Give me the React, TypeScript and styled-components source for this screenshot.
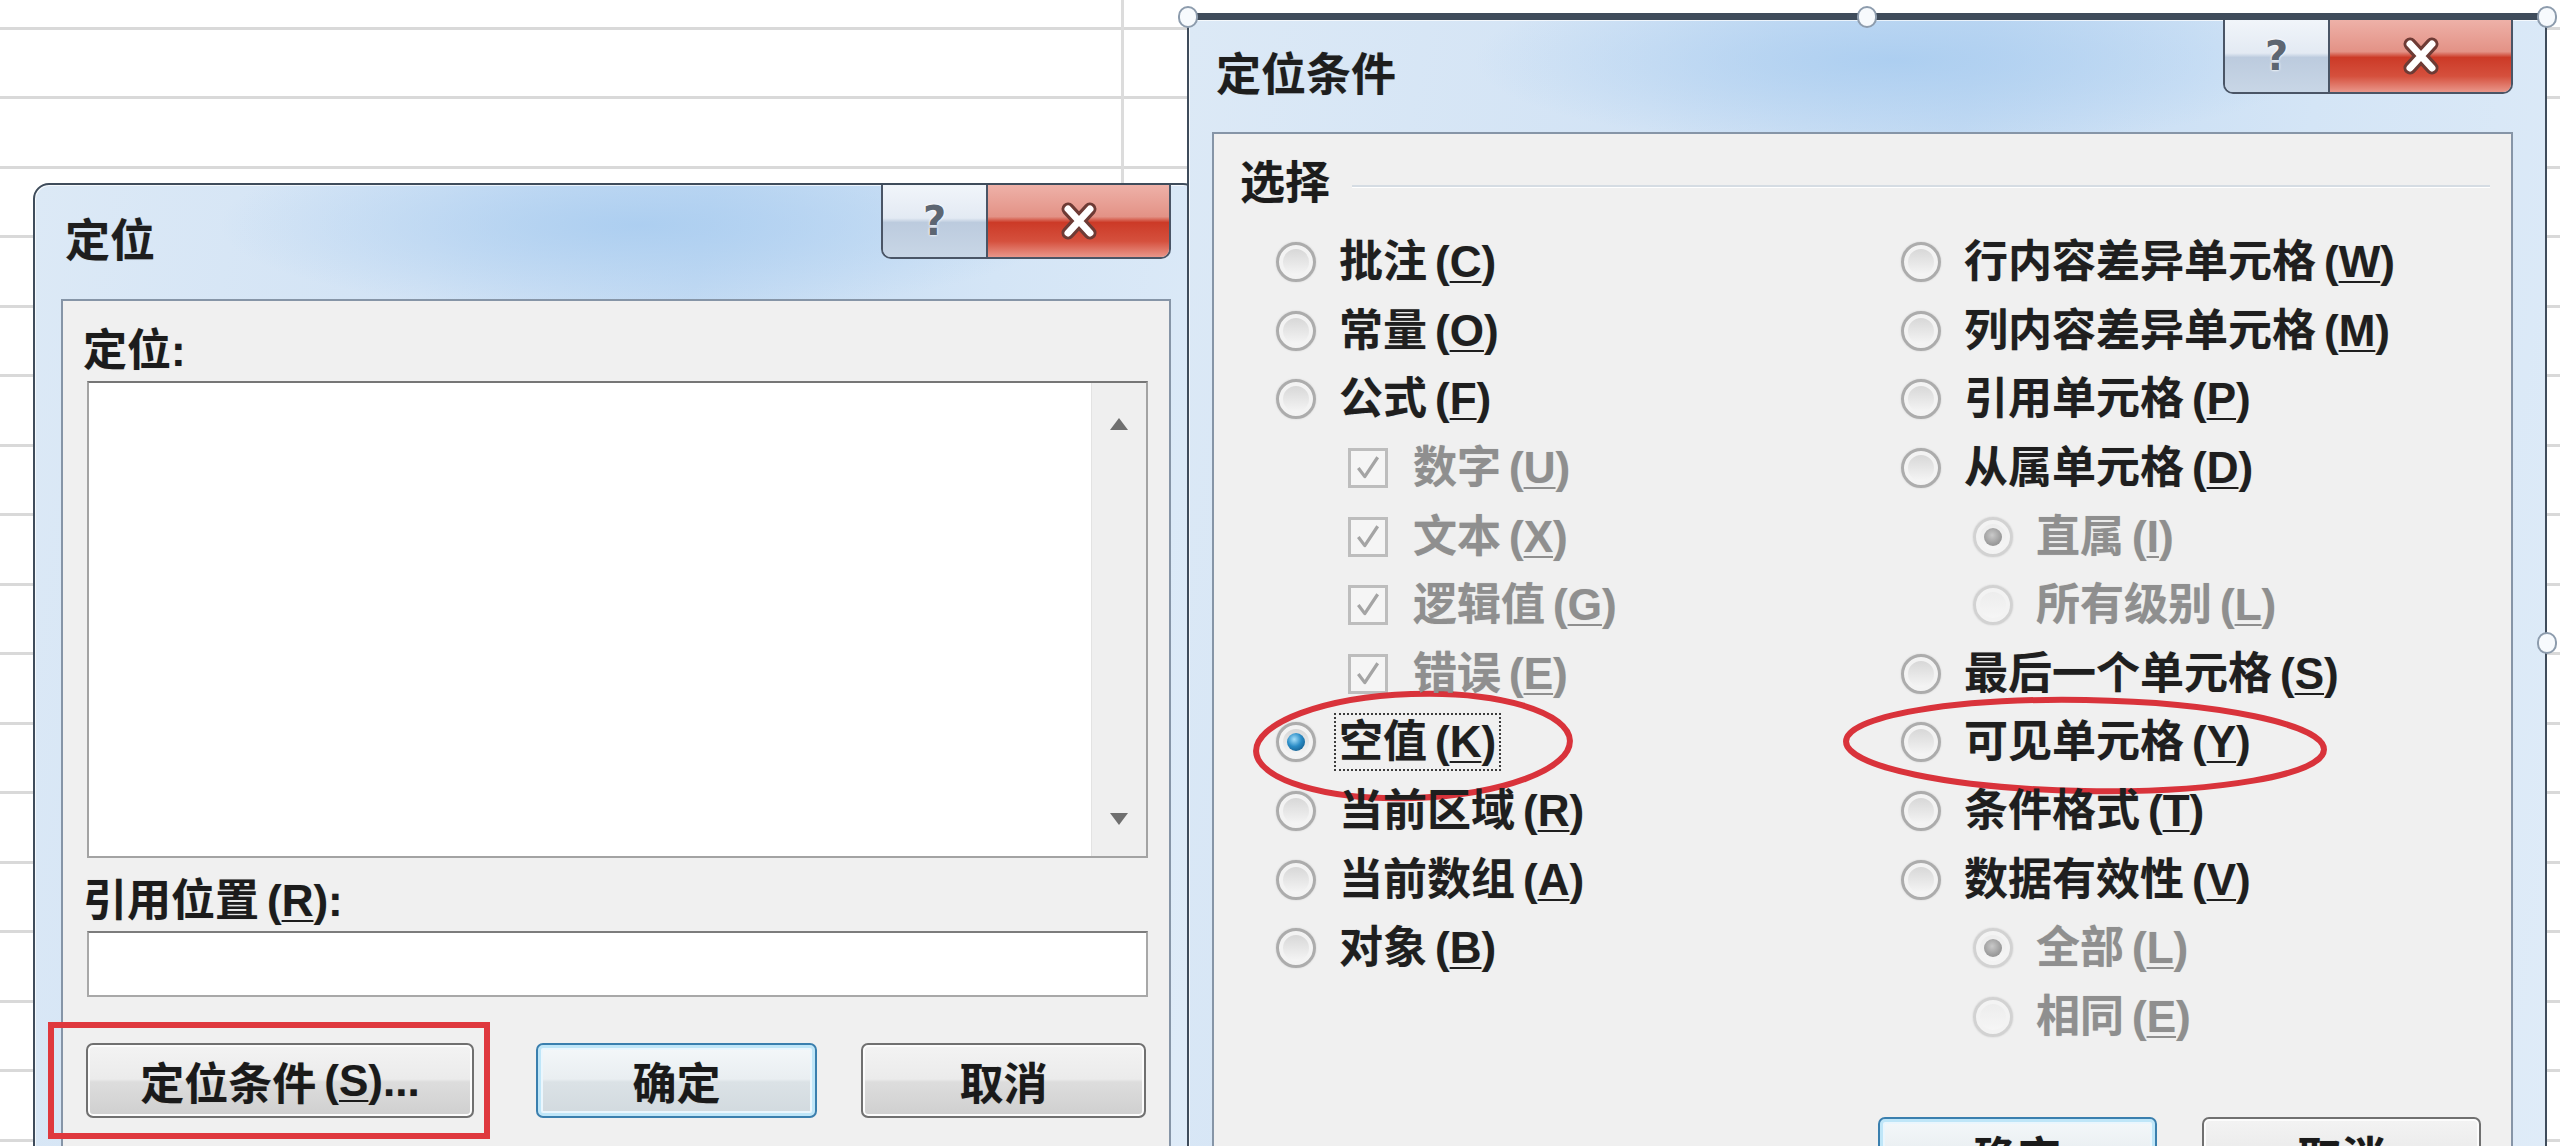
import React from 'react';
import styled, { createGlobalStyle, css } from 'styled-components';

const GlobalStyle = createGlobalStyle`
  html, body {
    margin: 0;
    padding: 0;
    background: #ffffff;
  }
  body {
    font-family: "Liberation Sans", "Noto Sans CJK SC", sans-serif;
    color: #1c1c1c;
  }
`;

// the reference is an enlarged bitmap, strokes read thick and soft
const heavy = css`
  font-weight: 700;
  text-shadow: 0 0 1px rgba(0, 0, 0, 0.25);
`;

const Sheet = styled.div`
  position: relative;
  width: 2560px;
  height: 1146px;
  overflow: hidden;
  background-color: #ffffff;
  background-image:
    linear-gradient(to right, transparent 1121px, #dcdcdc 1121px, #dcdcdc 1124px, transparent 1124px),
    repeating-linear-gradient(
      to bottom,
      transparent 0,
      transparent 27px,
      #d9d9d9 27px,
      #d9d9d9 30px,
      transparent 30px,
      transparent 69.5px
    );
`;

type WindowProps = {
  $x: number;
  $y: number;
  $w: number;
  $h: number;
  $top: number;
  $padL: number;
  $padR: number;
  $radius: number;
};

const Window = styled.section<WindowProps>`
  position: absolute;
  left: ${(p) => p.$x}px;
  top: ${(p) => p.$y}px;
  width: ${(p) => p.$w}px;
  height: ${(p) => p.$h}px;
  box-sizing: border-box;
  display: flex;
  flex-direction: column;
  border: 2px solid #3f4c5b;
  border-top-width: ${(p) => p.$top}px;
  border-radius: ${(p) => p.$radius}px ${(p) => p.$radius}px 0 0;
  padding: 0 ${(p) => p.$padR}px 0 ${(p) => p.$padL}px;
  background:
    radial-gradient(ellipse 420px 90px at 52% 40px, rgba(170, 205, 240, 0.9), rgba(170, 205, 240, 0) 100%),
    linear-gradient(100deg, #dce9f6 0%, #d2e3f5 30%, #c4dbf3 50%, #d4e5f6 72%, #e0ecf8 100%);
  box-shadow: inset 1px 1px 0 rgba(255, 255, 255, 0.7);
`;

const TitleBar = styled.header<{ $h: number }>`
  flex: 0 0 ${(p) => p.$h}px;
  display: flex;
  justify-content: space-between;
  align-items: center;
`;

const TitleText = styled.h1`
  margin: 0 0 0 4px;
  font-size: 45px;
  line-height: 60px;
  color: #1e1e1e;
  ${heavy}
`;

const CaptionGroup = styled.div`
  align-self: flex-start;
  display: flex;
  height: 72px;
  border: 2px solid #4a5566;
  border-top: none;
  border-radius: 0 0 10px 10px;
  overflow: hidden;
`;

const CaptionButton = styled.div<{ $kind: 'help' | 'close' }>`
  display: flex;
  align-items: center;
  justify-content: center;
  box-sizing: border-box;
  ${(p) =>
    p.$kind === 'help'
      ? css`
          width: 105px;
          border-right: 2px solid #4a5566;
          background: linear-gradient(#f1f5fa 0%, #e3eaf3 46%, #bccbde 52%, #c8d6e6 100%);
        `
      : css`
          width: 181px;
          background: linear-gradient(#eeb1a8 0%, #e39286 44%, #cc3a27 52%, #d5503d 78%, #e9968a 100%);
        `}
`;

const HelpGlyph = styled.span`
  font-family: "DejaVu Sans", sans-serif;
  font-weight: 700;
  font-size: 40px;
  line-height: 1;
  color: #5d6672;
  text-shadow: 0 0 2px #ffffff, 0 0 3px #ffffff;
`;

const Client = styled.div<{ $pad: string }>`
  flex: 1;
  box-sizing: border-box;
  background: #f0f0f0;
  border: 2px solid #8695a7;
  border-bottom: none;
  padding: ${(p) => p.$pad};
  display: flex;
  flex-direction: column;
`;

const FieldLabel = styled.div<{ $gap?: number }>`
  font-size: 44px;
  line-height: 60px;
  margin: ${(p) => p.$gap ?? 0}px 0 0 -4px;
  ${heavy}
`;

const ListBox = styled.div`
  height: 477px;
  box-sizing: border-box;
  background: #ffffff;
  border: 2px solid #a3a3a3;
  border-top-color: #767676;
  display: flex;
  justify-content: flex-end;
`;

const ScrollTrack = styled.div`
  width: 54px;
  background: #efefef;
  border-left: 1px solid #e3e3e3;
  display: flex;
  flex-direction: column;
  align-items: center;
  justify-content: space-between;
  padding: 34px 0 30px;
`;

const TextInput = styled.div`
  height: 66px;
  box-sizing: border-box;
  background: #ffffff;
  border: 2px solid #a8a8a8;
  border-top-color: #7c7c7c;
`;

const ButtonRow = styled.div<{ $gap: number; $end?: boolean }>`
  display: flex;
  align-items: center;
  margin-top: ${(p) => p.$gap}px;
  justify-content: ${(p) => (p.$end ? 'flex-end' : 'flex-start')};
  padding-right: ${(p) => (p.$end ? 30 : 0)}px;
`;

const Highlight = styled.div`
  border: 6px solid #df383e;
  padding: 15px 10px 15px 32px;
  margin-left: -39px;
`;

const PushButton = styled.div<{ $w: number; $default?: boolean; $ml?: number }>`
  width: ${(p) => p.$w}px;
  height: 75px;
  margin-left: ${(p) => p.$ml ?? 0}px;
  box-sizing: border-box;
  display: flex;
  align-items: center;
  justify-content: center;
  font-size: 44px;
  color: #1a1a1a;
  ${heavy}
  border-radius: 7px;
  border: 2px solid #707070;
  background: linear-gradient(#f3f3f3 0%, #ebebeb 48%, #dddddd 52%, #cfcfcf 100%);
  box-shadow: inset 0 0 0 2px #fcfcfc;
  ${(p) =>
    p.$default &&
    css`
      border-color: #3a7fae;
      box-shadow: inset 0 0 0 3px #bfe6f8, inset 0 0 0 5px #eaf6fd;
      background: linear-gradient(#f4f8fa 0%, #e9eef1 48%, #dbe2e6 52%, #d1d9de 100%);
    `}
`;

const Key = styled.span`
  margin-left: 8px;
  u {
    text-underline-offset: 4px;
    text-decoration-thickness: 2px;
  }
`;

const GroupHeader = styled.div`
  display: flex;
  align-items: center;
  height: 60px;
`;

const GroupTitle = styled.span`
  font-size: 45px;
  line-height: 60px;
  ${heavy}
`;

const GroupRule = styled.span`
  flex: 1;
  margin: 4px 21px 0 22px;
  border-top: 2px solid #d5dce3;
  border-bottom: 1px solid #ffffff;
`;

const OptionGrid = styled.div`
  display: grid;
  grid-template-columns: 625px 1fr;
  margin-top: 14px;
  padding-left: 36px;
`;

const Column = styled.div`
  display: flex;
  flex-direction: column;
`;

const OptionRow = styled.div<{ $indent: boolean }>`
  position: relative;
  height: 68.6px;
  display: flex;
  align-items: center;
  padding-left: ${(p) => (p.$indent ? 72 : 0)}px;
`;

type RadioState = 'off' | 'on' | 'disabled' | 'disabledOn';

const Radio = styled.span<{ $state: RadioState }>`
  position: relative;
  z-index: 1;
  flex: 0 0 auto;
  width: 40px;
  height: 40px;
  margin-right: 21px;
  box-sizing: border-box;
  border-radius: 50%;
  border: 3px solid ${(p) => (p.$state.startsWith('disabled') ? '#d2d2d2' : '#acacac')};
  background: ${(p) =>
    p.$state.startsWith('disabled')
      ? 'linear-gradient(#ebebeb, #f7f7f7)'
      : 'linear-gradient(#d3d3d3, #f9f9f9)'};
  box-shadow: inset 0 0 0 4px #f3f3f3, 0 0 2px rgba(0, 0, 0, 0.15);
  &::after {
    content: '';
    position: absolute;
    left: 8px;
    top: 8px;
    width: 18px;
    height: 18px;
    border-radius: 50%;
    display: ${(p) => (p.$state === 'on' || p.$state === 'disabledOn' ? 'block' : 'none')};
    background: ${(p) =>
      p.$state === 'on'
        ? 'radial-gradient(circle at 40% 35%, #a6e0fb 0%, #2a8cc6 45%, #0c4a75 100%)'
        : 'radial-gradient(circle at 45% 40%, #c9c9c9 0%, #9d9d9d 60%, #8a8a8a 100%)'};
  }
`;

const CheckBox = styled.span`
  flex: 0 0 auto;
  width: 40px;
  height: 40px;
  margin-right: 23px;
  box-sizing: border-box;
  border: 3px solid #bdbdbd;
  background: #f5f5f5;
  display: flex;
  align-items: center;
  justify-content: center;
`;

const OptionText = styled.span<{ $disabled: boolean; $focus: boolean }>`
  position: relative;
  z-index: 1;
  font-size: 44px;
  line-height: 54px;
  white-space: nowrap;
  font-weight: 700;
  color: ${(p) => (p.$disabled ? '#8f8f8f' : '#1f1f1f')};
  text-shadow: 0 0 1px rgba(0, 0, 0, 0.2);
  padding: 0 3px;
  margin-left: -3px;
  border: 2px dotted ${(p) => (p.$focus ? '#3c3c3c' : 'transparent')};
`;

const RingMark = styled.svg<{ $x: number; $y: number }>`
  position: absolute;
  z-index: 0;
  left: ${(p) => p.$x}px;
  top: ${(p) => p.$y}px;
  overflow: visible;
  pointer-events: none;
`;

const Handle = styled.span<{ $x: number; $y: number }>`
  position: absolute;
  left: ${(p) => p.$x}px;
  top: ${(p) => p.$y}px;
  width: 20px;
  height: 22px;
  box-sizing: border-box;
  border-radius: 10px;
  border: 2px solid #8d9cad;
  background: #f7fafd;
`;

type Option = {
  label: string;
  key: string;
  kind: 'radio' | 'check';
  indent?: boolean;
  disabled?: boolean;
  state?: RadioState;
  focus?: boolean;
  ring?: { x: number; y: number; w: number; h: number; rot: number };
};

const leftOptions: Option[] = [
  { label: '批注', key: 'C', kind: 'radio' },
  { label: '常量', key: 'O', kind: 'radio' },
  { label: '公式', key: 'F', kind: 'radio' },
  { label: '数字', key: 'U', kind: 'check', indent: true, disabled: true },
  { label: '文本', key: 'X', kind: 'check', indent: true, disabled: true },
  { label: '逻辑值', key: 'G', kind: 'check', indent: true, disabled: true },
  { label: '错误', key: 'E', kind: 'check', indent: true, disabled: true },
  {
    label: '空值',
    key: 'K',
    kind: 'radio',
    state: 'on',
    focus: true,
    ring: { x: -24, y: -18, w: 322, h: 112, rot: -2 },
  },
  { label: '当前区域', key: 'R', kind: 'radio' },
  { label: '当前数组', key: 'A', kind: 'radio' },
  { label: '对象', key: 'B', kind: 'radio' },
];

const rightOptions: Option[] = [
  { label: '行内容差异单元格', key: 'W', kind: 'radio' },
  { label: '列内容差异单元格', key: 'M', kind: 'radio' },
  { label: '引用单元格', key: 'P', kind: 'radio' },
  { label: '从属单元格', key: 'D', kind: 'radio' },
  { label: '直属', key: 'I', kind: 'radio', indent: true, disabled: true, state: 'disabledOn' },
  { label: '所有级别', key: 'L', kind: 'radio', indent: true, disabled: true, state: 'disabled' },
  { label: '最后一个单元格', key: 'S', kind: 'radio' },
  {
    label: '可见单元格',
    key: 'Y',
    kind: 'radio',
    ring: { x: -59, y: -12, w: 486, h: 99, rot: 1 },
  },
  { label: '条件格式', key: 'T', kind: 'radio' },
  { label: '数据有效性', key: 'V', kind: 'radio' },
  { label: '全部', key: 'L', kind: 'radio', indent: true, disabled: true, state: 'disabledOn' },
  { label: '相同', key: 'E', kind: 'radio', indent: true, disabled: true, state: 'disabled' },
];

const Mnemonic = ({ k, after = '' }: { k: string; after?: string }) => (
  <Key>
    (<u>{k}</u>){after}
  </Key>
);

const CloseGlyph = () => (
  <svg width="44" height="40" viewBox="0 0 44 40">
    <path d="M11 8 L33 32 M33 8 L11 32" stroke="#6e3b35" strokeWidth="13" strokeLinecap="round" />
    <path d="M11 8 L33 32 M33 8 L11 32" stroke="#ffffff" strokeWidth="7" strokeLinecap="round" />
  </svg>
);

const Arrow = ({ up }: { up: boolean }) => (
  <svg width="20" height="14" viewBox="0 0 20 14">
    <polygon points={up ? '10,1 19,13 1,13' : '1,1 19,1 10,13'} fill="#6f6f6f" />
  </svg>
);

const TickMark = () => (
  <svg width="28" height="28" viewBox="0 0 26 26">
    <path d="M4 13 L10 21 L22 3" fill="none" stroke="#a4a4a4" strokeWidth="3" strokeLinejoin="round" />
  </svg>
);

const Captions = () => (
  <CaptionGroup>
    <CaptionButton $kind="help">
      <HelpGlyph>?</HelpGlyph>
    </CaptionButton>
    <CaptionButton $kind="close">
      <CloseGlyph />
    </CaptionButton>
  </CaptionGroup>
);

const OptionItem = ({ opt }: { opt: Option }) => (
  <OptionRow $indent={!!opt.indent}>
    {opt.ring && (
      <RingMark
        $x={opt.ring.x}
        $y={opt.ring.y}
        width={opt.ring.w}
        height={opt.ring.h}
        viewBox={`0 0 ${opt.ring.w} ${opt.ring.h}`}
      >
        <ellipse
          cx={opt.ring.w / 2}
          cy={opt.ring.h / 2}
          rx={opt.ring.w / 2 - 4}
          ry={opt.ring.h / 2 - 4}
          fill="none"
          stroke="#d9333b"
          strokeWidth="6"
          transform={`rotate(${opt.ring.rot} ${opt.ring.w / 2} ${opt.ring.h / 2})`}
        />
      </RingMark>
    )}
    {opt.kind === 'check' ? (
      <CheckBox>
        <TickMark />
      </CheckBox>
    ) : (
      <Radio $state={opt.state ?? 'off'} />
    )}
    <OptionText $disabled={!!opt.disabled} $focus={!!opt.focus}>
      {opt.label}
      <Mnemonic k={opt.key} />
    </OptionText>
  </OptionRow>
);

const GotoDialog = () => (
  <Window $x={33} $y={183} $w={1166} $h={1100} $top={2} $padL={26} $padR={26} $radius={16}>
    <TitleBar $h={114}>
      <TitleText>定位</TitleText>
      <Captions />
    </TitleBar>
    <Client $pad="20px 21px 0 24px">
      <FieldLabel>定位:</FieldLabel>
      <ListBox>
        <ScrollTrack>
          <Arrow up />
          <Arrow up={false} />
        </ScrollTrack>
      </ListBox>
      <FieldLabel $gap={13}>
        引用位置
        <Mnemonic k="R" after=":" />
      </FieldLabel>
      <TextInput />
      <ButtonRow $gap={25}>
        <Highlight>
          <PushButton $w={388}>
            定位条件
            <Mnemonic k="S" after="..." />
          </PushButton>
        </Highlight>
        <PushButton $w={281} $ml={46} $default>
          确定
        </PushButton>
        <PushButton $w={285} $ml={44}>
          取消
        </PushButton>
      </ButtonRow>
    </Client>
  </Window>
);

const SpecialDialog = () => (
  <Window $x={1187} $y={13} $w={1360} $h={1300} $top={7} $padL={23} $padR={32} $radius={0}>
    <Handle $x={-11} $y={-14} />
    <Handle $x={668} $y={-14} />
    <Handle $x={1348} $y={-14} />
    <Handle $x={1348} $y={612} />
    <TitleBar $h={112}>
      <TitleText>定位条件</TitleText>
      <Captions />
    </TitleBar>
    <Client $pad="20px 0 0 26px">
      <GroupHeader>
        <GroupTitle>选择</GroupTitle>
        <GroupRule />
      </GroupHeader>
      <OptionGrid>
        <Column>
          {leftOptions.map((opt, i) => (
            <OptionItem key={`l-${i}`} opt={opt} />
          ))}
        </Column>
        <Column>
          {rightOptions.map((opt, i) => (
            <OptionItem key={`r-${i}`} opt={opt} />
          ))}
        </Column>
      </OptionGrid>
      <ButtonRow $gap={66} $end>
        <PushButton $w={279} $default>
          确定
        </PushButton>
        <PushButton $w={279} $ml={45}>
          取消
        </PushButton>
      </ButtonRow>
    </Client>
  </Window>
);

const App = () => (
  <>
    <GlobalStyle />
    <Sheet>
      <GotoDialog />
      <SpecialDialog />
    </Sheet>
  </>
);

export default App;
